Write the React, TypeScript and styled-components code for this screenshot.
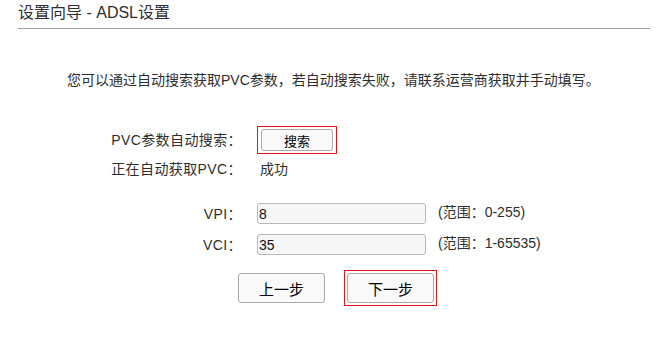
import React from "react";
import styled, { createGlobalStyle } from "styled-components";

const Global = createGlobalStyle`
  html, body { margin: 0; padding: 0; background: #ffffff; }
  body {
    font-family: "Liberation Sans", "Noto Sans CJK SC", Arial, sans-serif;
    color: #2e2e2e;
    font-size: 14px;
  }
`;

const Page = styled.div`
  padding: 0 9px 0 18px;
  width: 659px;
  height: 338px;
  box-sizing: border-box;
  overflow: hidden;
`;

const Header = styled.div`
  height: 29px;
  border-bottom: 1px solid #9e9e9e;
  box-sizing: border-box;
  display: flex;
  align-items: flex-end;
`;

const Title = styled.h1`
  margin: 0 0 5px 0;
  font-size: 16px;
  font-weight: normal;
  line-height: 20px;
  color: #2e2e2e;
`;

const Intro = styled.p`
  margin: 41px 0 0 49px;
  line-height: 20px;
  font-size: 14px;
`;

const Form = styled.div`
  margin-top: 36px;
  display: grid;
  grid-template-columns: 224px 1fr;
  column-gap: 15px;
  align-items: center;
`;

const Label = styled.div<{ $top?: number }>`
  text-align: right;
  line-height: 20px;
  letter-spacing: 0.4px;
  margin-top: ${(p) => p.$top ?? 0}px;
  white-space: nowrap;
`;

const Cell = styled.div<{ $top?: number }>`
  display: flex;
  align-items: center;
  margin-top: ${(p) => p.$top ?? 0}px;
  line-height: 20px;
`;

const Highlight = styled.div<{ $padX: number; $padY: number }>`
  border: 1px solid #e5141c;
  padding: ${(p) => p.$padY}px ${(p) => p.$padX}px;
  display: inline-flex;
`;

const Button = styled.button<{ $w: number; $h: number }>`
  width: ${(p) => p.$w}px;
  height: ${(p) => p.$h}px;
  box-sizing: border-box;
  border: 1px solid #a9a9a9;
  border-radius: 3px;
  background: #f9f9f9;
  color: #000000;
  font-family: "Liberation Sans", "Noto Sans CJK SC", Arial, sans-serif;
  font-size: ${(p) => (p.$h > 25 ? 15 : 13)}px;
  padding: 0;
  cursor: pointer;
`;

const Status = styled.span`
  padding-left: 3px;
`;

const Input = styled.input`
  width: 169px;
  height: 21px;
  box-sizing: border-box;
  border: 1px solid #b9b9b9;
  border-radius: 3px;
  background: #f7f7f7;
  padding: 0 0 0 1px;
  font-family: "Liberation Sans", Arial, sans-serif;
  font-size: 14px;
  color: #111111;
  outline: none;
`;

const Range = styled.span`
  margin-left: 12px;
  margin-top: -3px;
`;

const Actions = styled.div`
  margin: 15px 0 0 220px;
  display: flex;
  align-items: center;
  gap: 19px;
`;

export default function App() {
  return (
    <>
      <Global />
      <Page>
        <Header>
          <Title>设置向导 - ADSL设置</Title>
        </Header>
        <Intro>您可以通过自动搜索获取PVC参数，若自动搜索失败，请联系运营商获取并手动填写。</Intro>
        <Form>
          <Label>PVC参数自动搜索：</Label>
          <Cell>
            <Highlight $padX={3} $padY={2}>
              <Button $w={72} $h={22}>搜索</Button>
            </Highlight>
          </Cell>
          <Label $top={5}>正在自动获取PVC：</Label>
          <Cell $top={5}>
            <Status>成功</Status>
          </Cell>
          <Label $top={24}>VPI：</Label>
          <Cell $top={24}>
            <Input defaultValue="8" />
            <Range>(范围：0-255)</Range>
          </Cell>
          <Label $top={10}>VCI：</Label>
          <Cell $top={10}>
            <Input defaultValue="35" />
            <Range>(范围：1-65535)</Range>
          </Cell>
        </Form>
        <Actions>
          <Button $w={87} $h={30}>上一步</Button>
          <Highlight $padX={2} $padY={2}>
            <Button $w={87} $h={30}>下一步</Button>
          </Highlight>
        </Actions>
      </Page>
    </>
  );
}
